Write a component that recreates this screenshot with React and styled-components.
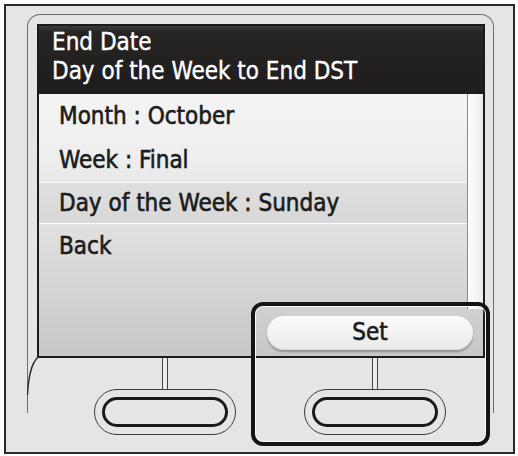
import React from "react";
import styled, { createGlobalStyle } from "styled-components";

const Global = createGlobalStyle`
  html, body { margin: 0; padding: 0; background: #ffffff; }
  * { box-sizing: border-box; }
`;

const FONT = `"DejaVu Sans Condensed", "DejaVu Sans", "Liberation Sans", sans-serif`;

const Frame = styled.div`
  position: relative;
  margin: 4px 0 0 4px;
  width: 511px;
  height: 450px;
  border: 2px solid #2a2a2a;
  background: #e5e5e5;
  padding: 8px 0 0 21px;
  font-family: ${FONT};
  font-stretch: condensed;
`;

const Bezel = styled.div`
  width: 467px;
  height: 399px;
  border: 1px solid #6e6e6e;
  border-bottom: none;
  border-radius: 13px 13px 0 0;
  padding: 9px 0 0 9px;
`;

const Screen = styled.div`
  width: 448px;
  height: 334px;
  border: 2px solid #1b1b1b;
  display: flex;
  flex-direction: column;
  background: linear-gradient(#fafafa 0%, #eeeeee 40%, #c7c7c7 100%);
`;

const Header = styled.div`
  height: 68px;
  flex: none;
  padding: 2px 0 0 13px;
  background: linear-gradient(#3d3a3a 0px, #272424 6px, #1f1c1c 100%);
  color: #ffffff;
  font-size: 24px;
  line-height: 29px;
  white-space: nowrap;
  -webkit-text-stroke: 0.35px #ffffff;
`;

const ListArea = styled.div`
  height: 215px;
  flex: none;
  display: flex;
`;

const Rows = styled.div`
  flex: 1;
  display: flex;
  flex-direction: column;
`;

const Row = styled.div`
  height: ${(p) => (p.$current ? "42px" : "44px")};
  display: flex;
  align-items: center;
  padding-left: 20px;
  font-size: 24px;
  line-height: 29px;
  color: #1c1c1c;
  white-space: nowrap;
  -webkit-text-stroke: 0.6px #1c1c1c;
  ${(p) =>
    p.$current &&
    `
    border-top: 1px solid #ffffff;
    border-bottom: 1px solid #ffffff;
    background: rgba(0, 0, 0, 0.045);
  `}
`;

const ScrollTrack = styled.div`
  width: 16px;
  flex: none;
  border-left: 1px solid #8a8a8a;
  background: linear-gradient(to right, #fdfdfd, #ececec);
`;

const BottomBar = styled.div`
  flex: 1;
  display: flex;
  justify-content: flex-end;
  align-items: center;
  padding-right: 10px;
`;

const SetPill = styled.div`
  width: 206px;
  height: 34px;
  border-radius: 17px;
  background: linear-gradient(#fbfbfb, #e9e9e9);
  box-shadow: 0 2px 2px rgba(0, 0, 0, 0.28), inset 0 -1px 0 rgba(0, 0, 0, 0.06);
  display: flex;
  align-items: center;
  justify-content: center;
  font-size: 24px;
  line-height: 29px;
  color: #1c1c1c;
  -webkit-text-stroke: 0.6px #1c1c1c;
`;

const ButtonRow = styled.div`
  display: flex;
  gap: 68px;
  padding-left: 57px;
`;

const ButtonGroup = styled.div`
  width: 142px;
  display: flex;
  flex-direction: column;
  align-items: center;
`;

const Stem = styled.div`
  width: 6px;
  height: 31px;
  border-left: 1px solid #444;
  border-right: 1px solid #444;
  background: #ececec;
`;

const HardKey = styled.div`
  width: 142px;
  height: 46px;
  border: 1px solid #3a3a3a;
  border-radius: 23px;
  display: flex;
  align-items: center;
  justify-content: center;
`;

const HardKeyInner = styled.div`
  width: 126px;
  height: 30px;
  border: 3px solid #1a1a1a;
  border-radius: 15px;
  background: #e6e6e6;
`;

const Highlight = styled.div`
  position: absolute;
  left: 245px;
  top: 296px;
  width: 239px;
  height: 144px;
  border: 4px solid #141414;
  border-radius: 12px;
  box-shadow: inset 0 0 0 1px rgba(255, 255, 255, 0.9);
  pointer-events: none;
`;

const Curve = styled.svg`
  position: absolute;
  left: 14px;
  top: 344px;
`;

export default function App() {
  return (
    <>
      <Global />
      <Frame>
        <Bezel>
          <Screen>
            <Header>
              <div>End Date</div>
              <div>Day of the Week to End DST</div>
            </Header>
            <ListArea>
              <Rows>
                <Row>Month : October</Row>
                <Row>Week : Final</Row>
                <Row $current>Day of the Week : Sunday</Row>
                <Row>Back</Row>
              </Rows>
              <ScrollTrack />
            </ListArea>
            <BottomBar>
              <SetPill>Set</SetPill>
            </BottomBar>
          </Screen>
          <ButtonRow>
            <ButtonGroup>
              <Stem />
              <HardKey>
                <HardKeyInner />
              </HardKey>
            </ButtonGroup>
            <ButtonGroup>
              <Stem />
              <HardKey>
                <HardKeyInner />
              </HardKey>
            </ButtonGroup>
          </ButtonRow>
        </Bezel>
        <Highlight />
        <Curve width="20" height="50" viewBox="0 0 20 50">
          <path
            d="M18 7 C11 14 8.5 26 7.5 45"
            fill="none"
            stroke="#2a2a2a"
            strokeWidth="1.3"
          />
        </Curve>
      </Frame>
    </>
  );
}
